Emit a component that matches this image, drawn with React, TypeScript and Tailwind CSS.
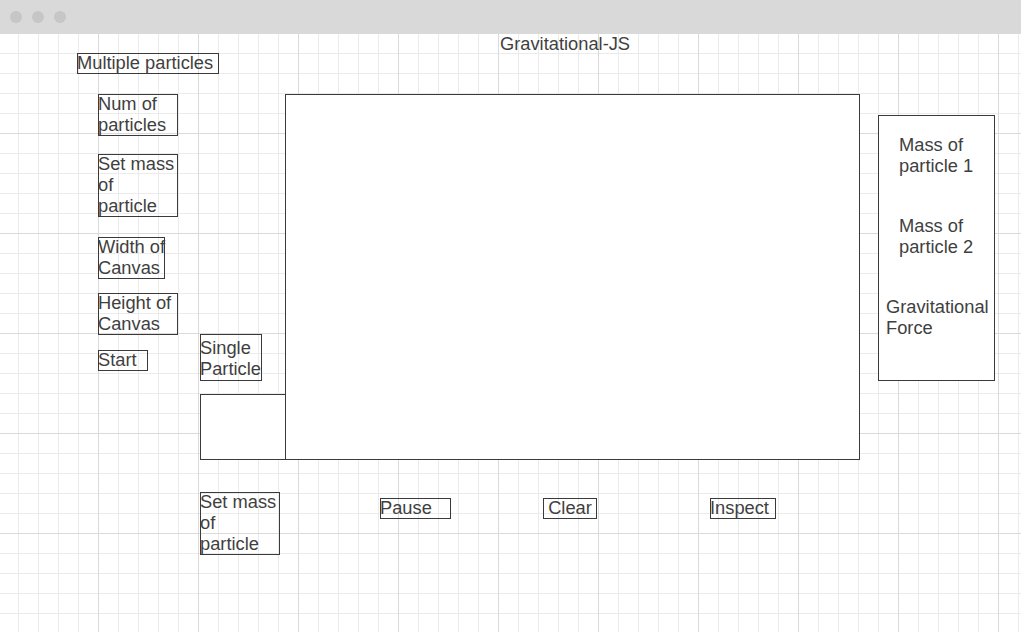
import React from "react";

const box = "shadow-[inset_0_0_0_1px_#3a3a3a] text-[#3f3f3f] leading-[21px] whitespace-nowrap";
const font = { fontFamily: '"Liberation Sans", Arial, sans-serif' };

function T({ children }: { children: React.ReactNode }) {
  return <span className="block relative -top-px">{children}</span>;
}

export default function App() {
  return (
    <div className="w-[1021px] h-[632px] overflow-hidden bg-white text-[18.3px] text-[#3f3f3f]" style={font}>
      {/* title bar */}
      <div className="h-[33px] bg-[#d9d9d9] flex items-center gap-[10px] pl-[10px]">
        <span className="w-[12px] h-[12px] rounded-full bg-[#c6c6c6]" />
        <span className="w-[12px] h-[12px] rounded-full bg-[#c6c6c6]" />
        <span className="w-[12px] h-[12px] rounded-full bg-[#c6c6c6]" />
      </div>
      {/* canvas */}
      <div className="h-[599px] flex flex-col [background-image:linear-gradient(to_right,#dadada_1px,transparent_1px),linear-gradient(to_bottom,#dadada_1px,transparent_1px),linear-gradient(to_right,#ebebeb_1px,transparent_1px),linear-gradient(to_bottom,#ebebeb_1px,transparent_1px)] [background-size:100px_100px,100px_100px,20px_20px,20px_20px] [background-position:-2px_0px]">
        <div className="h-[20px] pl-[500px] leading-[21px]">Gravitational-JS</div>
        <div className="pl-[77px]">
          <div className={`${box} w-[142px] h-[21px]`}><T>Multiple particles</T></div>
        </div>
        {/* main row */}
        <div className="flex mt-[20px] h-[366px]">
          <div className="ml-[98px] w-[80px] flex flex-col">
            <div className={`${box} w-[80px] h-[42px]`}><T>Num of<br />particles</T></div>
            <div className={`${box} w-[80px] h-[63px] mt-[18px]`}><T>Set mass<br />of<br />particle</T></div>
            <div className={`${box} w-[67px] h-[42px] mt-[20px]`}><T>Width of<br />Canvas</T></div>
            <div className={`${box} w-[80px] h-[42px] mt-[14px]`}><T>Height of<br />Canvas</T></div>
            <div className={`${box} w-[50px] h-[21px] mt-[15px]`}><T>Start</T></div>
          </div>
          <div className="ml-[22px] w-[86px] flex flex-col pt-[240px]">
            <div className={`${box} w-[62px] h-[47px] pt-[3px]`}>Single<br />Particle</div>
            <div className={`${box} bg-white w-[86px] h-[66px] mt-[13px]`} />
          </div>
          <div className={`${box} bg-white -ml-px w-[575px] h-[366px]`} />
          <div className={`${box} bg-white ml-[18px] mt-[21px] w-[117px] h-[266px] flex flex-col`}>
            <div className="pl-[21px] pt-[19px]">Mass of<br />particle 1</div>
            <div className="pl-[21px] mt-[39px]">Mass of<br />particle 2</div>
            <div className="pl-[8px] mt-[39px]">Gravitational<br />Force</div>
          </div>
        </div>
        {/* bottom row */}
        <div className="flex mt-[32px] items-start">
          <div className={`${box} ml-[200px] w-[80px] h-[63px]`}><T>Set mass<br />of<br />particle</T></div>
          <div className={`${box} ml-[100px] mt-[6px] w-[71px] h-[21px]`}><T>Pause</T></div>
          <div className={`${box} ml-[92px] mt-[6px] w-[54px] h-[21px] text-center`}><T>Clear</T></div>
          <div className={`${box} ml-[113px] mt-[6px] w-[66px] h-[21px]`}><T>Inspect</T></div>
        </div>
      </div>
    </div>
  );
}
